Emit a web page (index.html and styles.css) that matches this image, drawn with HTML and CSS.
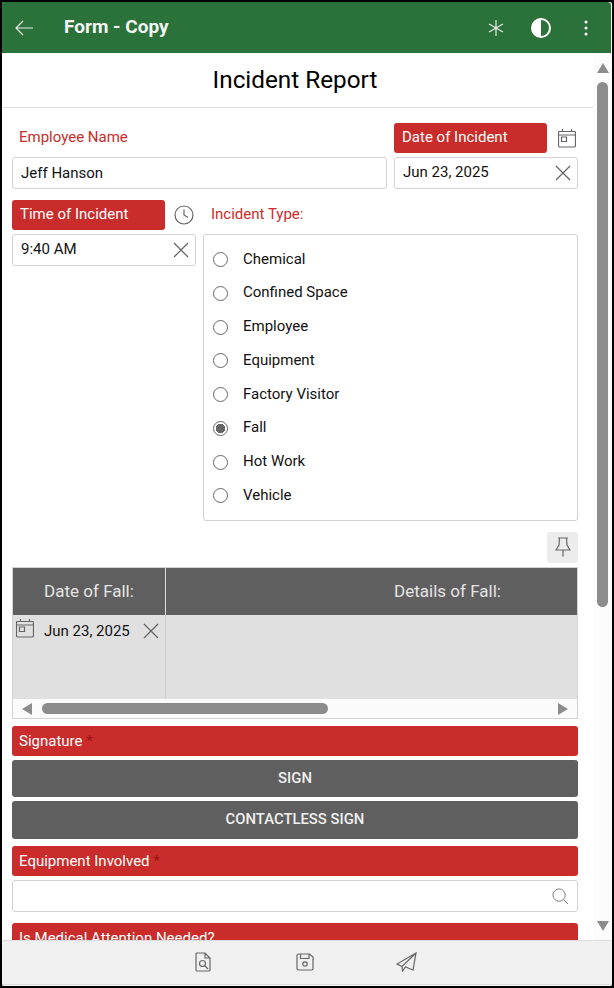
FILE: index.html
```html
<!DOCTYPE html>
<html lang="en">
<head>
<meta charset="utf-8">
<title>Form - Copy</title>
<link rel="stylesheet" href="styles.css">
</head>
<body>
<div class="frame">
  <header class="appbar">
    <svg class="ic back" viewBox="0 0 18 16"><path d="M18 8H1M8 1 1 8l7 7"/></svg>
    <div class="apptitle">Form - Copy</div>
    <svg class="ic star" viewBox="0 0 18 18"><path d="M9 1v16M2.100 5l13.800 8M15.900 5 2.100 13"/></svg>
    <svg class="contrast" viewBox="0 0 20 20"><circle cx="10" cy="10" r="9" fill="none" stroke="#fff" stroke-width="2"/><path d="M10 1a9 9 0 0 0 0 18z" fill="#fff"/></svg>
    <svg class="dots" viewBox="0 0 4 16"><circle cx="2" cy="2" r="1.500"/><circle cx="2" cy="8" r="1.500"/><circle cx="2" cy="14" r="1.500"/></svg>
  </header>
  <div class="middle">
    <main class="content">
      <h1 class="pagetitle">Incident Report</h1>
      <div class="form">
        <div class="row-top">
          <div class="col">
            <div class="label-plain">Employee Name</div>
            <div class="input"><span>Jeff Hanson</span></div>
          </div>
          <div class="col">
            <div class="label-icon">
              <div class="label-red">Date of Incident</div>
              <svg class="gray-ic cal" viewBox="0 0 18 20"><path d="M1.500 3.500h15a1 1 0 0 1 1 1v13a1.500 1.500 0 0 1-1.500 1.500H2a1.500 1.500 0 0 1-1.500-1.500v-13a1 1 0 0 1 1-1zM.5 7h17M4.500 1v2.500M13.500 1v2.500M3.500 9h5v4.500h-5z"/></svg>
            </div>
            <div class="input input-low"><span>Jun 23, 2025</span>
              <svg class="gray-ic x" viewBox="0 0 16 16"><path d="M1 1l14 14M15 1 1 15"/></svg>
            </div>
          </div>
        </div>
        <div class="row-mid">
          <div class="col-time">
            <div class="label-icon">
              <div class="label-red">Time of Incident</div>
              <svg class="gray-ic clock" viewBox="0 0 20 20"><circle cx="10" cy="10" r="9"/><path d="M10 4.500V10l4 2.500"/></svg>
            </div>
            <div class="input input-low"><span>9:40 AM</span>
              <svg class="gray-ic x" viewBox="0 0 16 16"><path d="M1 1l14 14M15 1 1 15"/></svg>
            </div>
          </div>
          <div class="col-type">
            <div class="label-type">Incident Type:</div>
            <div class="radios">
              <div class="radio"><i class="dot"></i>Chemical</div>
              <div class="radio"><i class="dot"></i>Confined Space</div>
              <div class="radio"><i class="dot"></i>Employee</div>
              <div class="radio"><i class="dot"></i>Equipment</div>
              <div class="radio"><i class="dot"></i>Factory Visitor</div>
              <div class="radio"><i class="dot on"></i>Fall</div>
              <div class="radio"><i class="dot"></i>Hot Work</div>
              <div class="radio"><i class="dot"></i>Vehicle</div>
            </div>
          </div>
        </div>
        <div class="pin-row">
          <div class="pin">
            <svg class="gray-ic pin-ic" viewBox="0 0 16 20"><path d="M3 1h10M4.500 1l-.5 7-3 5h14l-3-5-.5-7M8 13v6.500"/></svg>
          </div>
        </div>
        <div class="grid">
          <div class="grid-head">
            <div class="th th-date">Date of Fall:</div>
            <div class="th th-details">Details of Fall:</div>
          </div>
          <div class="grid-body">
            <div class="td-date">
              <svg class="gray-ic cal cal-cell" viewBox="0 0 18 20"><path d="M1.500 3.500h15a1 1 0 0 1 1 1v13a1.500 1.500 0 0 1-1.500 1.500H2a1.500 1.500 0 0 1-1.500-1.500v-13a1 1 0 0 1 1-1zM.5 7h17M4.500 1v2.500M13.500 1v2.500M3.500 9h5v4.500h-5z"/></svg>
              <span class="td-text">Jun 23, 2025</span>
              <svg class="gray-ic x x-cell" viewBox="0 0 16 16"><path d="M1 1l14 14M15 1 1 15"/></svg>
            </div>
          </div>
          <div class="hscroll">
            <i class="arrow-left"></i>
            <div class="hthumb"></div>
            <i class="arrow-right"></i>
          </div>
        </div>
        <div class="bar bar-sig">Signature <b class="req">*</b></div>
        <div class="btn btn-sign">SIGN</div>
        <div class="btn btn-contact">CONTACTLESS SIGN</div>
        <div class="bar bar-equip">Equipment Involved <b class="req">*</b></div>
        <div class="input input-search">
          <svg class="search" viewBox="0 0 18 18"><circle cx="7.500" cy="7.500" r="6.500"/><path d="m12.500 12.500 4.500 4.500"/></svg>
        </div>
        <div class="bar bar-med">Is Medical Attention Needed?</div>
      </div>
    </main>
    <aside class="vscroll">
      <i class="arrow-up"></i>
      <div class="vthumb"></div>
      <i class="arrow-down"></i>
    </aside>
  </div>
  <footer class="footbar">
    <svg class="gray-ic foot-ic" viewBox="0 0 16 20"><path d="M2 1h8l5 5v12a1 1 0 0 1-1 1H2a1 1 0 0 1-1-1V2a1 1 0 0 1 1-1zM10 1v5h5"/><circle cx="7.500" cy="11.500" r="3"/><path d="m10 14 3 3"/></svg>
    <svg class="gray-ic foot-ic foot-save" viewBox="0 0 18 18"><path d="M2.500 1h11l3.500 3v11.500a1.500 1.500 0 0 1-1.500 1.500h-13A1.500 1.500 0 0 1 1 15.500v-13A1.500 1.500 0 0 1 2.500 1zM4.500 1v4.500h8.500V1"/><circle cx="9" cy="11" r="2.200"/></svg>
    <svg class="gray-ic foot-ic foot-send" viewBox="0 0 21 20"><path d="M20 1 1 12l5 2.500L20 1l-3 17-7.500-3L6.500 19l-.5-4.500"/></svg>
  </footer>
</div>
</body>
</html>
```

FILE: styles.css
```css
* { box-sizing: border-box; }
html, body { margin: 0; padding: 0; background: #000; }
body { font-family: Roboto, "Liberation Sans", sans-serif; font-size: 15px; color: #111; }
.frame { width: 614px; height: 988px; border: 2px solid #000; background: #fff; display: flex; flex-direction: column; overflow: hidden; border-radius: 4px; }
.appbar { height: 51px; flex: none; background: #2b713a; display: flex; align-items: center; color: #fff; border-right: 1px solid #fff; border-top-right-radius: 4px; }
.ic { fill: none; stroke: #e8efe9; stroke-width: 1.200; }
.back { width: 18px; height: 16px; margin-left: 13px; flex: none; }
.apptitle { margin-left: 31px; padding-bottom: 2px; font-size: 19px; font-weight: 700; flex: 1; color: #f2f6f3; }
.star { width: 18px; height: 18px; margin-right: 26px; }
.contrast { width: 20px; height: 20px; margin-right: 33px; }
.dots { width: 4px; height: 16px; fill: #fff; margin-right: 23px; }
.middle { flex: 1; min-height: 0; display: flex; }
.content { width: 591px; overflow: hidden; flex: none; }
.pagetitle { margin: 0; height: 55px; padding-right: 5px; line-height: 54px; font-size: 24.300px; font-weight: 400; text-align: center; color: #000; border-bottom: 1px solid #dcdcdc; }
.form { padding: 15px 15px 0 10px; }
.row-top { display: grid; grid-template-columns: 375px 184px; column-gap: 7px; }
.label-plain { height: 34px; line-height: 29px; padding-left: 7px; color: #c92c2a; }
.label-icon { display: flex; align-items: center; height: 34px; padding-bottom: 4px; }
.label-red { width: 153px; height: 30px; line-height: 28px; padding-left: 8px; background: #c92c2a; color: #fff; border-radius: 3px; }
.gray-ic { fill: none; stroke: #666; stroke-width: 1.200; }
.cal { width: 18px; height: 20px; margin-left: 11px; }
.clock { width: 20px; height: 20px; margin-left: 9px; }
.input { height: 32px; border: 1px solid #d2d2d2; border-radius: 3px; background: #fff; display: flex; align-items: center; padding: 0 6px 0 8px; line-height: 30px; }
.input span { flex: 1; }
.input-low span { margin-top: -2px; }
.x { width: 16px; height: 16px; flex: none; stroke-width: 1.300; }
.row-mid { display: grid; grid-template-columns: 184px 375px; column-gap: 7px; margin-top: 11px; }
.label-type { height: 34px; line-height: 29px; padding-left: 8px; color: #c92c2a; }
.radios { height: 287px; border: 1px solid #d2d2d2; border-radius: 3px; padding: 6.700px 0 0 9px; }
.radio { height: 33.750px; display: flex; align-items: center; gap: 15px; }
.dot { width: 15px; height: 15px; border: 1px solid #666; border-radius: 50%; background: #fff; flex: none; margin-top: 2px; }
.dot.on { border: 1px solid #666; background: radial-gradient(circle, #666 0 4.500px, #fff 5px); }
.pin-row { display: flex; justify-content: flex-end; margin-top: 11px; }
.pin { width: 31px; height: 31px; background: #ececec; border-radius: 3px; display: flex; align-items: center; justify-content: center; }
.pin-ic { width: 16px; height: 20px; margin-top: -1px; }
.grid { margin-top: 4px; height: 152px; border: 1px solid #d2d2d2; overflow: hidden; }
.grid-head { display: flex; height: 47px; background: #5f5f5f; color: #e4e4e4; font-size: 17px; }
.th { display: flex; align-items: center; justify-content: center; padding-bottom: 1px; }
.th-date { width: 153px; border-right: 1px solid #e0e0e0; }
.th-details { flex: 1; padding-left: 152px; }
.grid-body { height: 84px; background: #e0e0e0; }
.td-date { width: 153px; height: 84px; border-right: 1px solid #cfcfcf; display: flex; align-items: flex-start; }
.cal-cell { margin: 3px 0 0 3px; flex: none; }
.td-text { margin: 7px 0 0 10px; flex: 1; color: #111; }
.x-cell { margin: 8px 6px 0 0; }
.hscroll { height: 19px; background: #fbfbfb; display: flex; align-items: center; }
.arrow-left { width: 0; height: 0; border-style: solid; border-width: 6px 10px 6px 0; border-color: transparent #8c8c8c transparent transparent; margin-left: 9px; }
.hthumb { width: 286px; height: 11px; background: #8c8c8c; border-radius: 6px; margin-left: 10px; }
.arrow-right { width: 0; height: 0; border-style: solid; border-width: 6px 0 6px 10px; border-color: transparent transparent transparent #8c8c8c; margin-left: 230px; }
.bar { height: 30px; line-height: 31px; background: #c92c2a; color: #fff; border-radius: 3px; padding-left: 7px; }
.req { color: #9c1414; font-weight: 400; }
.bar-sig { margin-top: 7px; }
.btn { background: #5f5f5f; color: #f0f0f0; border-radius: 3px; display: flex; align-items: center; justify-content: center; font-weight: 500; font-size: 14.850px; padding-bottom: 2px; }
.btn-sign { height: 37px; margin-top: 4px; }
.btn-contact { height: 38px; margin-top: 4px; }
.bar-equip { margin-top: 7px; }
.input-search { margin-top: 4px; justify-content: flex-end; padding-right: 8px; }
.search { width: 17px; height: 17px; fill: none; stroke: #777; stroke-width: 1; }
.bar-med { margin-top: 11px; line-height: 31px; }
.vscroll { width: 19px; flex: none; background: #fcfcfc; display: flex; flex-direction: column; align-items: center; }
.arrow-up { width: 0; height: 0; margin-top: 10px; border-style: solid; border-width: 0 6.500px 10px; border-color: transparent transparent #8c8c8c; }
.vthumb { width: 11px; height: 525px; margin-top: 9px; background: #8c8c8c; border-radius: 6px; }
.arrow-down { width: 0; height: 0; margin-top: 314px; border-style: solid; border-width: 10px 6.500px 0; border-color: #8c8c8c transparent transparent; }
.footbar { height: 46px; flex: none; background: linear-gradient(#f0f0f0 43px, #dcdcdc 43px, #dcdcdc 44px, #f8f8f8 44px); border-top: 1px solid #dedede; display: flex; align-items: center; padding: 0 0 3px 193px; }
.foot-ic { width: 16px; height: 20px; stroke-width: 1.200; }
.foot-save { width: 18px; height: 18px; margin-left: 85px; }
.foot-send { width: 21px; height: 20px; margin-left: 82px; }
```
